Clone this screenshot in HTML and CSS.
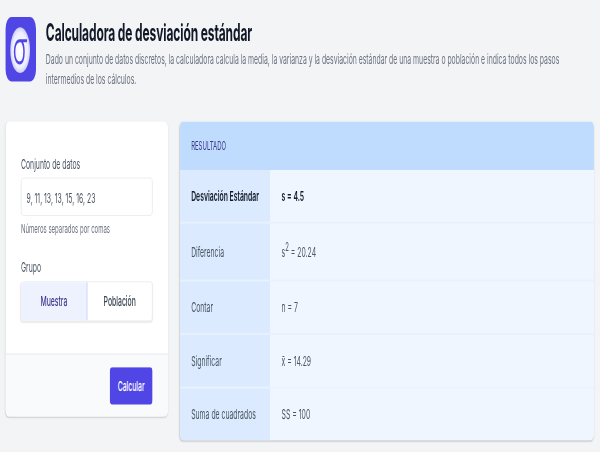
FILE: index.html
```html
<!DOCTYPE html>
<html lang="es">
<head>
<meta charset="utf-8">
<title>Calculadora de desviación estándar</title>
<link rel="stylesheet" href="styles.css">
</head>
<body>
<div class="frame">
<div class="canvas">
  <header class="head">
    <div class="logo">
      <svg width="70" height="76" viewBox="0 0 70 76" aria-hidden="true">
        <defs><radialGradient id="g" cx="0.5" cy="0.5" r="0.55"><stop offset="0" stop-color="#ffffff"/><stop offset="0.7" stop-color="#eeeefd"/><stop offset="1" stop-color="#b9bbf2"/></radialGradient></defs>
        <ellipse cx="34" cy="39" rx="23" ry="27" fill="url(#g)"/>
        <path d="M50 28 H33 C25 28 21 34 21 41 C21 49 26 54 33 54 C40 54 43 48 43 41 C43 35 41 31 37 28" fill="none" stroke="#4f46e5" stroke-width="3.5"/>
      </svg>
    </div>
    <div class="intro">
      <h1 class="title">Calculadora de desviación estándar</h1>
      <p class="desc">Dado un conjunto de datos discretos, la calculadora calcula la media, la varianza y la desviación estándar de una muestra o población e indica todos los pasos intermedios de los cálculos.</p>
    </div>
  </header>
  <main class="layout">
    <section class="card form">
      <div class="fields">
        <div class="label">Conjunto de datos</div>
        <div class="input">9, 11, 13, 13, 15, 16, 23</div>
        <div class="help">Números separados por comas</div>
        <div class="label group-label">Grupo</div>
        <div class="seg">
          <div class="seg-item active">Muestra</div>
          <div class="seg-item">Población</div>
        </div>
      </div>
      <div class="foot"><div class="btn">Calcular</div></div>
    </section>
    <section class="card result">
      <div class="res-head">RESULTADO</div>
      <div class="row first"><div class="key strong">Desviación Estándar</div><div class="val strong">s = 4.5</div></div>
      <div class="row tall"><div class="key">Diferencia</div><div class="val">s<sup>2</sup> = 20.24</div></div>
      <div class="row"><div class="key">Contar</div><div class="val">n = 7</div></div>
      <div class="row"><div class="key">Significar</div><div class="val">x̄ = 14.29</div></div>
      <div class="row"><div class="key">Suma de cuadrados</div><div class="val">SS = 100</div></div>
    </section>
  </main>
</div>
</div>
</body>
</html>
```
FILE: styles.css
```css
html, body { margin: 0; height: 100%; overflow: hidden; background: #f3f4f6; }
.frame { width: 600px; height: 452px; overflow: hidden; }
.canvas {
  width: 1400px;
  height: 532px;
  padding: 20px 14px 0 13px;
  box-sizing: border-box;
  font-family: Inter, "Liberation Sans", sans-serif;
  color: #374151;
  transform: scale(0.42857, 0.85);
  transform-origin: 0 0;
}
.head { display: flex; gap: 23px; }
.logo { width: 71px; height: 76px; flex: none; background: #4f46e5; border-radius: 14px; }
.logo svg { display: block; }
.intro { padding-top: 2px; width: 1250px; }
.title { margin: 0; font-size: 28px; line-height: 32px; font-weight: 700; letter-spacing: -.25px; color: #111827; }
.desc { margin: 3px 0 0; font-size: 16px; line-height: 24px; color: #6b7280; }
.layout { display: flex; gap: 28px; margin-top: 38px; align-items: flex-start; }
.card { border-radius: 8px; overflow: hidden; box-shadow: 0 1px 3px rgba(0,0,0,.1), 0 1px 2px rgba(0,0,0,.05); }
.form { width: 379px; background: #fff; flex: none; }
.fields { padding: 40px 36px 39px; height: 273px; box-sizing: border-box; }
.label { font-size: 16px; line-height: 20px; color: #4b5563; }
.input {
  margin-top: 6px; height: 45px; box-sizing: border-box; padding: 0 12px;
  border: 1px solid #dfe3e9; border-radius: 6px; background: #fff;
  font-size: 16px; line-height: 46px; color: #4b5563;
}
.help { margin-top: 7px; font-size: 14px; line-height: 16px; color: #6b7280; }
.group-label { margin-top: 27px; }
.seg {
  margin-top: 7px; display: flex; height: 47px; border-radius: 6px; overflow: hidden;
  border: 1px solid #dfe3e9; box-sizing: border-box;
  box-shadow: 0 1px 2px rgba(0,0,0,.08);
}
.seg-item { flex: 1; text-align: center; font-size: 16px; line-height: 45px; font-weight: 500; color: #374151; }
.seg-item.active { background: #eef2ff; color: #3f3a8c; border-right: 2px solid #c7d2fe; }
.foot { display: flex; justify-content: flex-end; padding: 15px 36px 14px; background: #f9fafb; border-top: 1px solid #e5e7eb; }
.btn { width: 100px; height: 44px; border-radius: 6px; background: #4f46e5; color: #fff; font-size: 16px; font-weight: 500; line-height: 44px; text-align: center; }
.result { flex: 1; background: #eff6ff; }
.res-head { height: 57px; padding: 0 26px; background: #bfdbfe; font-size: 14px; font-weight: 400; line-height: 57px; color: #3f3a8c; }
.row { display: flex; height: 63px; border-top: 2px solid #e8f1fe; box-sizing: border-box; font-size: 16px; line-height: 61px; }
.row.first { border-top: 0; height: 61px; line-height: 61px; }
.row.tall { height: 68px; line-height: 66px; }
.key { width: 210px; flex: none; box-sizing: border-box; padding-left: 26px; background: #dbeafe; color: #4b5563; }
.val { padding-left: 27px; color: #4b5563; }
.strong { font-weight: 600; color: #111827; }
sup { font-size: 14px; line-height: 0; }
```
